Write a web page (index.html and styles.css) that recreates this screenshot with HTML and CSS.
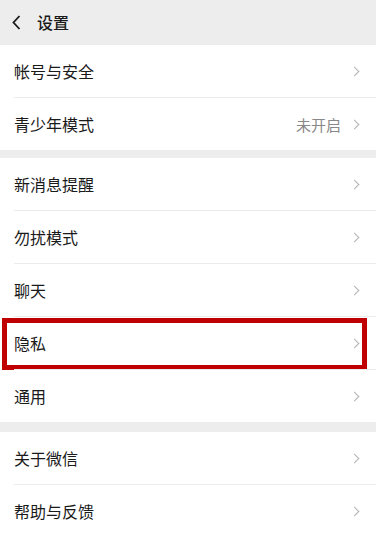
FILE: index.html
```html
<!DOCTYPE html>
<html lang="zh-CN">
<head>
<meta charset="utf-8">
<title>设置</title>
<link rel="stylesheet" href="styles.css">
</head>
<body>
<div class="screen">
  <header class="topbar">
    <svg class="back" width="9" height="15" viewBox="0 0 9 15"><path d="M7.5 1 L1.5 7.5 L7.5 14" fill="none" stroke="#1a1a1a" stroke-width="1.8"/></svg>
    <span class="title">设置</span>
  </header>

  <section class="group">
    <div class="row"><span class="label">帐号与安全</span><span class="chev"></span></div>
    <div class="row"><span class="label">青少年模式</span><span class="value">未开启</span><span class="chev"></span></div>
  </section>

  <div class="gap g8"></div>

  <section class="group">
    <div class="row"><span class="label">新消息提醒</span><span class="chev"></span></div>
    <div class="row"><span class="label">勿扰模式</span><span class="chev"></span></div>
    <div class="row"><span class="label">聊天</span><span class="chev"></span></div>
    <div class="row highlight"><span class="label">隐私</span><span class="chev"></span></div>
    <div class="row"><span class="label">通用</span><span class="chev"></span></div>
  </section>

  <div class="gap g10"></div>

  <section class="group">
    <div class="row"><span class="label">关于微信</span><span class="chev"></span></div>
    <div class="row"><span class="label">帮助与反馈</span><span class="chev"></span></div>
  </section>
</div>
</body>
</html>
```
FILE: styles.css
```css
* { box-sizing: border-box; }
html, body { margin: 0; padding: 0; background: #fff; }
body {
  font-family: "Noto Sans CJK SC", "Noto Sans", sans-serif;
  color: #1a1a1a;
  overflow: hidden;
}
.screen { width: 376px; }
.topbar {
  height: 45px;
  background: #ededed;
  display: flex;
  align-items: center;
  padding-left: 12px;
}
.back { display: block; margin-right: 16px; }
.title { font-size: 16px; font-weight: 500; line-height: 1; margin-top: -1px; }
.group { background: #fff; }
.row {
  position: relative;
  height: 52px;
  display: flex;
  align-items: center;
  padding: 0 18px 0 14px;
}
.row + .row { height: 53px; padding-top: 1px; }
.row + .row::before {
  content: "";
  position: absolute;
  left: 14px; right: 0; top: 0;
  height: 1px;
  background: #ececec;
}
.label { font-size: 16px; flex: 1; line-height: 1; }
.value { font-size: 15px; color: #888; margin-right: 10px; line-height: 1; }
.chev {
  width: 7px; height: 7px;
  border-top: 1.3px solid #b2b2b2;
  border-right: 1.3px solid #b2b2b2;
  transform: rotate(45deg);
  margin-top: 1px;
}
.gap { background: #ededed; }
.g8 { height: 8px; }
.g10 { height: 10px; }
.highlight::after {
  content: "";
  position: absolute;
  left: 2px; right: 9px; top: 2px; bottom: -1px;
  border: 5px solid #c00000;
}
```
